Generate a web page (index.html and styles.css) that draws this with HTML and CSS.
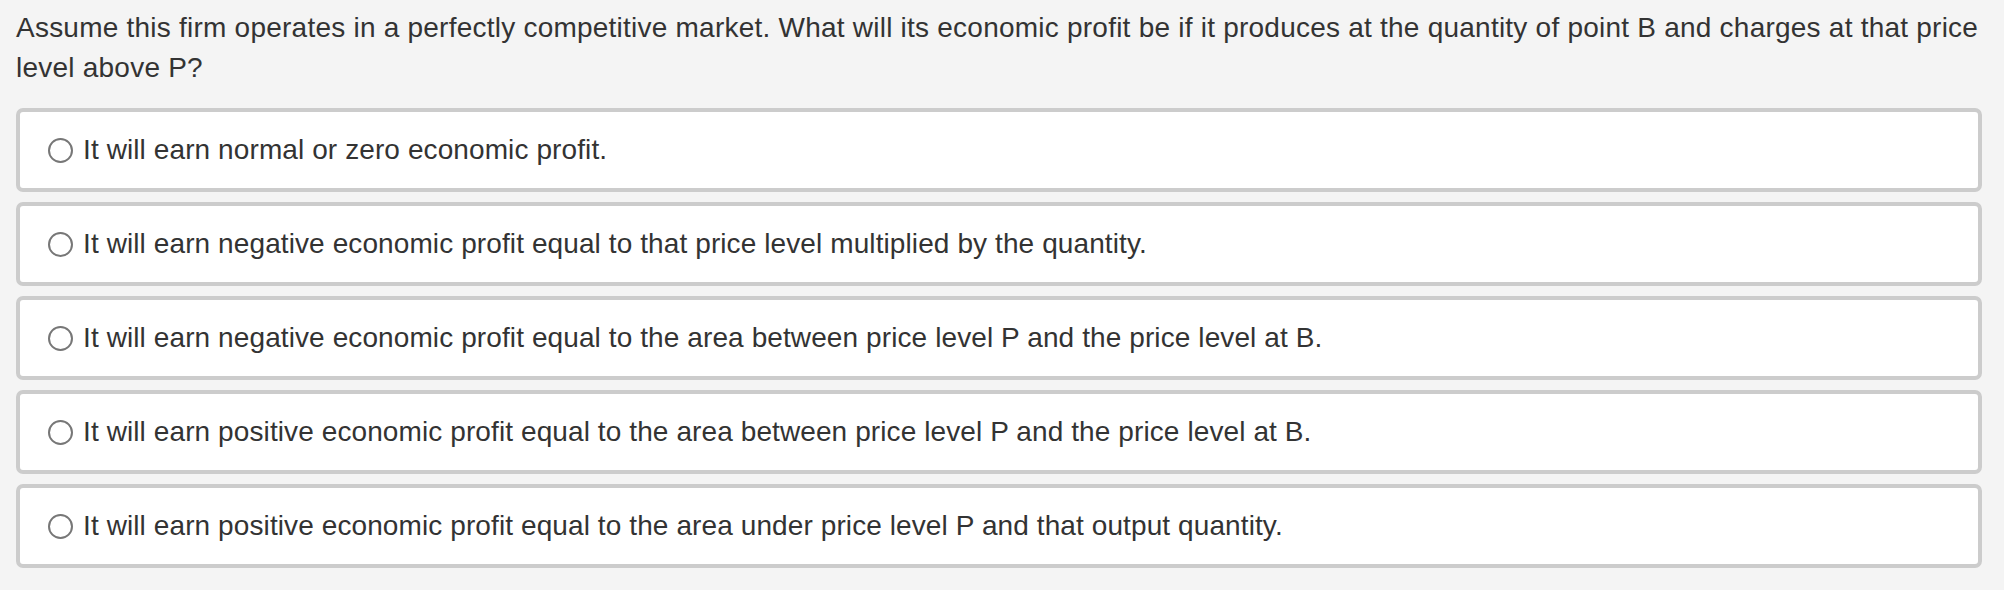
FILE: index.html
```html
<!DOCTYPE html>
<html>
<head>
<meta charset="utf-8">
<link rel="stylesheet" href="styles.css">
</head>
<body>
<div class="page">
  <p class="question">Assume this firm operates in a perfectly competitive market. What will its economic profit be if it produces at the quantity of point B and charges at that price level above P?</p>
  <ul class="options">
    <li class="option"><span class="radio"></span><span class="label">It will earn normal or zero economic profit.</span></li>
    <li class="option"><span class="radio"></span><span class="label">It will earn negative economic profit equal to that price level multiplied by the quantity.</span></li>
    <li class="option"><span class="radio"></span><span class="label">It will earn negative economic profit equal to the area between price level P and the price level at B.</span></li>
    <li class="option"><span class="radio"></span><span class="label">It will earn positive economic profit equal to the area between price level P and the price level at B.</span></li>
    <li class="option"><span class="radio"></span><span class="label">It will earn positive economic profit equal to the area under price level P and that output quantity.</span></li>
  </ul>
</div>
</body>
</html>
```
FILE: styles.css
```css
html, body {
  margin: 0;
  padding: 0;
  background: #f4f4f4;
}
body {
  font-family: "Liberation Sans", Arial, Helvetica, sans-serif;
  font-size: 28px;
  color: #333333;
}
.page {
  padding: 8px 22px 0 16px;
}
.question {
  margin: 0 0 20px 0;
  line-height: 40px;
  letter-spacing: 0.23px;
}
.options {
  list-style: none;
  margin: 0;
  padding: 0;
}
.option {
  display: flex;
  align-items: center;
  height: 76px;
  margin-bottom: 10px;
  background: #fff;
  border: 4px solid #cccccc;
  border-radius: 7px;
  padding: 0 28px;
}
.radio {
  width: 21px;
  height: 21px;
  border: 2px solid #777777;
  border-radius: 50%;
  background: #fff;
  margin-right: 10px;
  flex: none;
}
.label {
  line-height: 40px;
  letter-spacing: 0.1px;
}
```
